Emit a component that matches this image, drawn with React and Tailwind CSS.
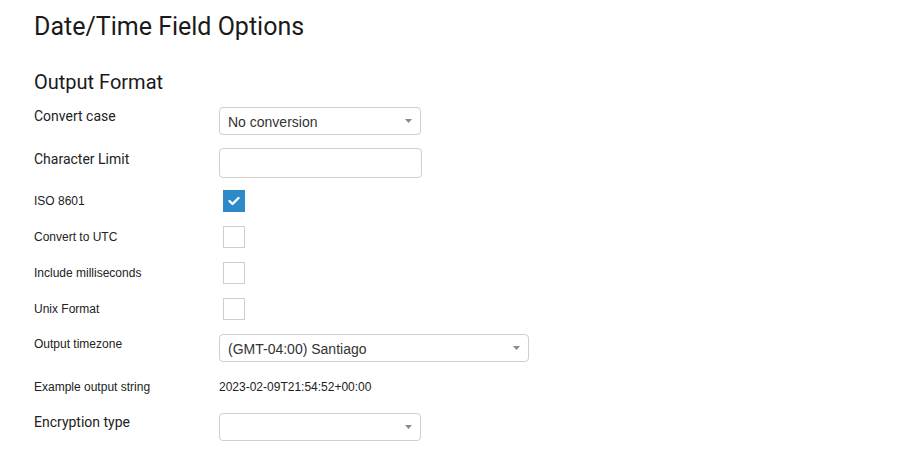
import React from 'react';

const roboto = { fontFamily: 'Roboto, "Noto Sans", sans-serif' };

function Caret() {
  return (
    <svg width="7" height="4" viewBox="0 0 7 4" className="shrink-0">
      <path d="M0 0 L7 0 L3.5 4 Z" fill="#8a8a8a" />
    </svg>
  );
}

function Select({ value, width }) {
  return (
    <div
      className={`flex h-[28px] items-center justify-between rounded-[4px] border border-[#cfcfcf] bg-white pl-[8px] pr-[8px] text-[14px] text-[#333] ${width}`}
    >
      <span className="truncate pt-[2px]">{value}</span>
      <Caret />
    </div>
  );
}

function Checkbox({ checked }) {
  if (checked) {
    return (
      <div className="ml-[4px] flex h-[22px] w-[22px] items-center justify-center bg-[#2c8ac8]">
        <svg width="12" height="10" viewBox="0 0 12 10">
          <path d="M1.5 5 L4.5 8 L10.5 2" fill="none" stroke="#fff" strokeWidth="2.4" strokeLinecap="round" strokeLinejoin="round" />
        </svg>
      </div>
    );
  }
  return <div className="ml-[4px] h-[22px] w-[22px] border border-[#cfcfc8] bg-white" />;
}

function CheckRow({ label, checked, className }) {
  return (
    <div className={`grid grid-cols-[185px_1fr] items-start ${className}`}>
      <span className="text-[12px] leading-[22px] text-[#222]">{label}</span>
      <Checkbox checked={checked} />
    </div>
  );
}

export default function App() {
  return (
    <div
      className="min-h-[469px] w-full bg-white pl-[34px] text-[#222]"
      style={{ fontFamily: '"Liberation Sans", Arial, sans-serif' }}
    >
      <h1 className="pt-[11px] text-[25px] leading-[32px] text-[#1a1a1a]" style={roboto}>
        Date/Time Field Options
      </h1>

      <h2 className="mt-[27px] text-[20px] leading-[24px] text-[#1a1a1a]" style={roboto}>
        Output Format
      </h2>

      {/* Convert case */}
      <div className="mt-[12px] grid grid-cols-[185px_1fr] items-start">
        <span className="text-[14px] leading-[20px]" style={roboto}>Convert case</span>
        <div className="pt-px">
          <Select value="No conversion" width="w-[202px]" />
        </div>
      </div>

      {/* Character limit */}
      <div className="mt-[13px] grid grid-cols-[185px_1fr] items-start">
        <span className="mt-px text-[14px] leading-[20px]" style={roboto}>Character Limit</span>
        <input
          type="text"
          className="h-[30px] w-[203px] rounded-[4px] border border-[#cfcfcf] bg-white px-2 text-[14px] outline-none"
        />
      </div>

      <CheckRow label="ISO 8601" checked className="mt-[12px]" />
      <CheckRow label="Convert to UTC" className="mt-[14px]" />
      <CheckRow label="Include milliseconds" className="mt-[14px]" />
      <CheckRow label="Unix Format" className="mt-[14px]" />

      {/* Output timezone */}
      <div className="mt-[14px] grid grid-cols-[185px_1fr] items-start">
        <span className="mt-[2px] text-[12px] leading-[16px]">Output timezone</span>
        <Select value="(GMT-04:00) Santiago" width="w-[310px]" />
      </div>

      {/* Example output */}
      <div className="mt-[17px] grid grid-cols-[185px_1fr] items-start text-[12px] leading-[16px]">
        <span>Example output string</span>
        <span className="text-[#222]">2023-02-09T21:54:52+00:00</span>
      </div>

      {/* Encryption type */}
      <div className="mt-[17px] grid grid-cols-[185px_1fr] items-start">
        <span className="text-[14px] leading-[20px]" style={roboto}>Encryption type</span>
        <div className="pt-px">
          <Select value="" width="w-[202px]" />
        </div>
      </div>
    </div>
  );
}
